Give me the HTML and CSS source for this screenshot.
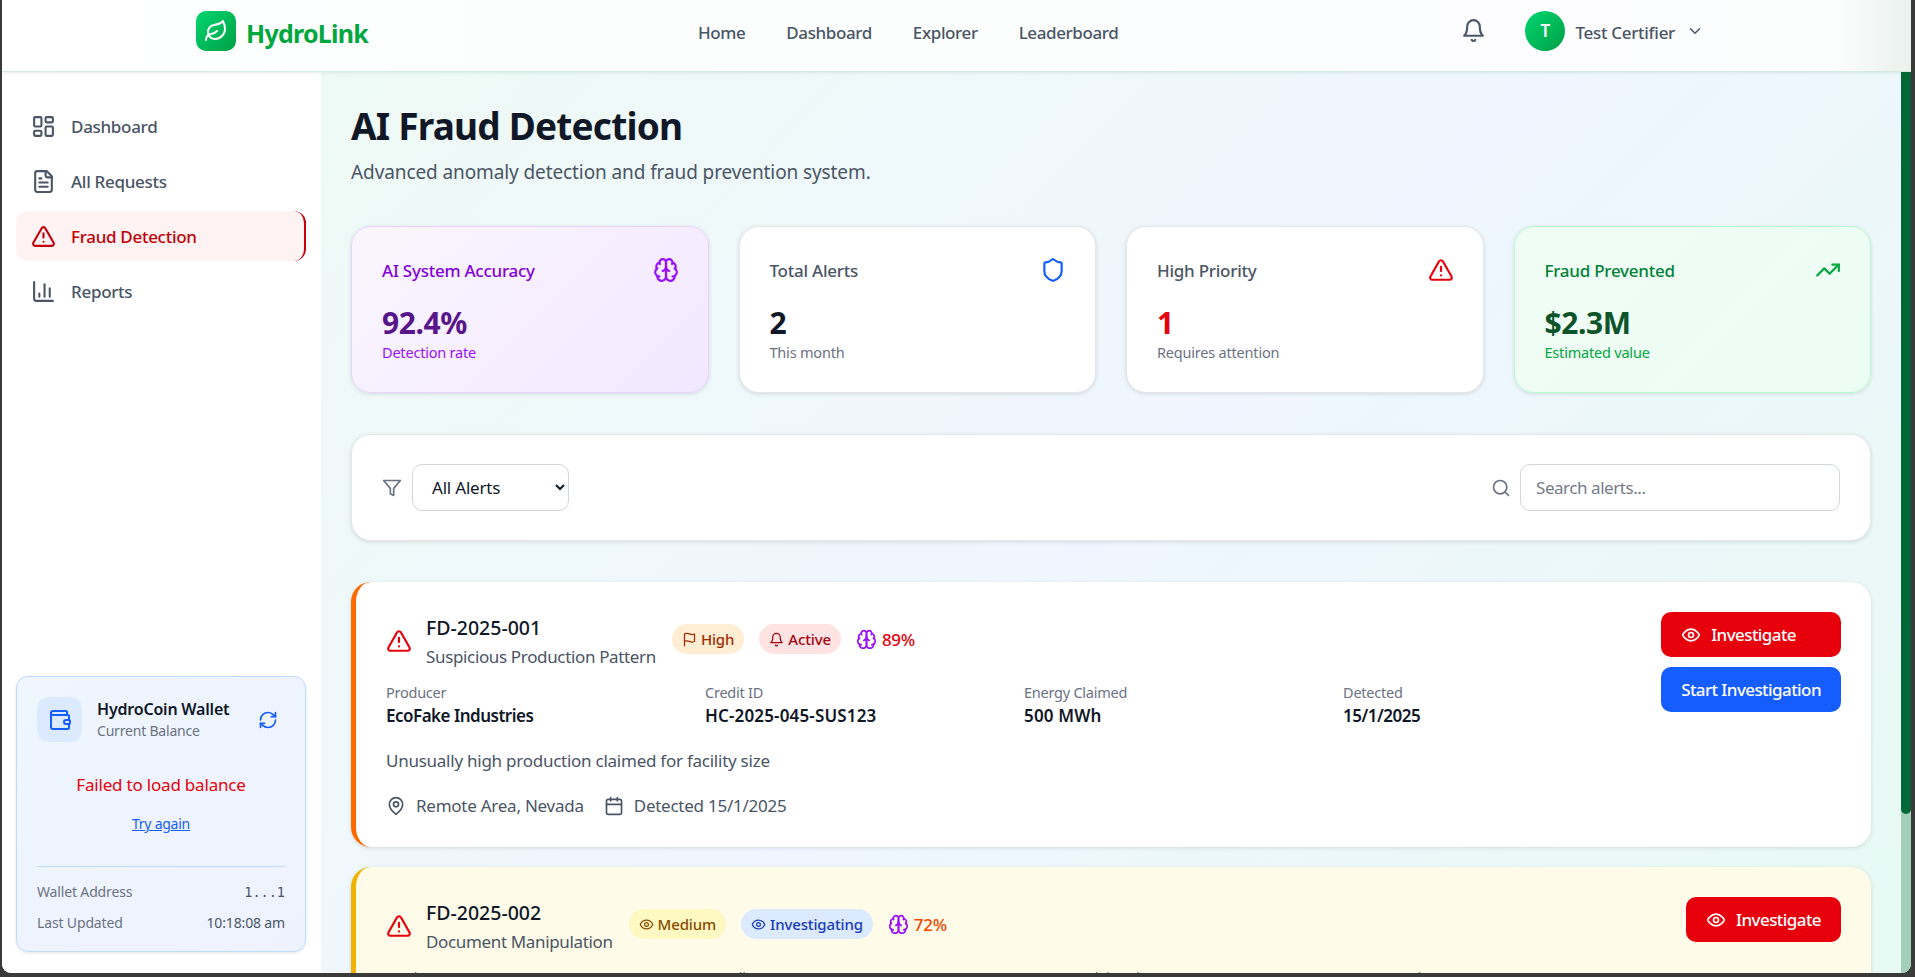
FILE: index.html
```html
<!DOCTYPE html>
<html lang="en">
<head>
    <meta charset="UTF-8">
    <meta name="viewport" content="width=device-width, initial-scale=1.0">
    <title>HydroLink - AI Fraud Detection</title>
    <link rel="stylesheet" href="styles.css">
</head>
<body>
    <svg class="sprite" xmlns="http://www.w3.org/2000/svg">
        <symbol id="i-leaf" viewBox="0 0 24 24"><path d="M11 20A7 7 0 0 1 9.8 6.1C15.5 5 17 4.48 19 2c1 2 2 4.18 2 8 0 5.5-4.78 10-10 10Z"/><path d="M2 21c0-3 1.85-5.36 5.08-6C9.5 14.52 12 13 13 12"/></symbol>
        <symbol id="i-bell" viewBox="0 0 24 24"><path d="M6 8a6 6 0 0 1 12 0c0 7 3 9 3 9H3s3-2 3-9"/><path d="M10.3 21a1.94 1.94 0 0 0 3.4 0"/></symbol>
        <symbol id="i-chevron" viewBox="0 0 24 24"><path d="m6 9 6 6 6-6"/></symbol>
        <symbol id="i-dashboard" viewBox="0 0 24 24"><rect x="3" y="3" width="7" height="9" rx="1"/><rect x="14" y="3" width="7" height="5" rx="1"/><rect x="14" y="12" width="7" height="9" rx="1"/><rect x="3" y="16" width="7" height="5" rx="1"/></symbol>
        <symbol id="i-file" viewBox="0 0 24 24"><path d="M15 2H6a2 2 0 0 0-2 2v16a2 2 0 0 0 2 2h12a2 2 0 0 0 2-2V7Z"/><path d="M14 2v4a2 2 0 0 0 2 2h4"/><path d="M10 9H8"/><path d="M16 13H8"/><path d="M16 17H8"/></symbol>
        <symbol id="i-alert" viewBox="0 0 24 24"><path d="m21.73 18-8-14a2 2 0 0 0-3.48 0l-8 14A2 2 0 0 0 4 21h16a2 2 0 0 0 1.73-3"/><path d="M12 9v4"/><path d="M12 17h.01"/></symbol>
        <symbol id="i-chart" viewBox="0 0 24 24"><path d="M3 3v16a2 2 0 0 0 2 2h16"/><path d="M18 17V9"/><path d="M13 17V5"/><path d="M8 17v-3"/></symbol>
        <symbol id="i-wallet" viewBox="0 0 24 24"><path d="M19 7V4a1 1 0 0 0-1-1H5a2 2 0 0 0 0 4h15a1 1 0 0 1 1 1v4h-3a2 2 0 0 0 0 4h3a1 1 0 0 0 1-1v-2a1 1 0 0 0-1-1"/><path d="M3 5v14a2 2 0 0 0 2 2h15a1 1 0 0 0 1-1v-4"/></symbol>
        <symbol id="i-refresh" viewBox="0 0 24 24"><path d="M3 12a9 9 0 0 1 9-9 9.75 9.75 0 0 1 6.74 2.74L21 8"/><path d="M21 3v5h-5"/><path d="M21 12a9 9 0 0 1-9 9 9.75 9.75 0 0 1-6.74-2.74L3 16"/><path d="M8 16H3v5"/></symbol>
        <symbol id="i-brain" viewBox="0 0 24 24"><path d="M12 5a3 3 0 1 0-5.997.125 4 4 0 0 0-2.526 5.77 4 4 0 0 0 .556 6.588A4 4 0 1 0 12 18Z"/><path d="M12 5a3 3 0 1 1 5.997.125 4 4 0 0 1 2.526 5.77 4 4 0 0 1-.556 6.588A4 4 0 1 1 12 18Z"/><path d="M15 13a4.5 4.5 0 0 1-3-4 4.5 4.5 0 0 1-3 4"/><path d="M17.599 6.5a3 3 0 0 0 .399-1.375"/><path d="M6.003 5.125A3 3 0 0 0 6.401 6.5"/><path d="M3.477 10.896a4 4 0 0 1 .585-.396"/><path d="M19.938 10.5a4 4 0 0 1 .585.396"/><path d="M6 18a4 4 0 0 1-1.967-.516"/><path d="M19.967 17.484A4 4 0 0 1 18 18"/></symbol>
        <symbol id="i-shield" viewBox="0 0 24 24"><path d="M20 13c0 5-3.5 7.5-7.66 8.95a1 1 0 0 1-.67-.01C7.5 20.5 4 18 4 13V6a1 1 0 0 1 1-1c2 0 4.5-1.2 6.24-2.72a1.17 1.17 0 0 1 1.52 0C14.51 3.81 17 5 19 5a1 1 0 0 1 1 1z"/></symbol>
        <symbol id="i-trend" viewBox="0 0 24 24"><polyline points="22 7 13.5 15.5 8.5 10.5 2 17"/><polyline points="16 7 22 7 22 13"/></symbol>
        <symbol id="i-filter" viewBox="0 0 24 24"><polygon points="22 3 2 3 10 12.46 10 19 14 21 14 12.46 22 3"/></symbol>
        <symbol id="i-search" viewBox="0 0 24 24"><circle cx="11" cy="11" r="8"/><path d="m21 21-4.3-4.3"/></symbol>
        <symbol id="i-eye" viewBox="0 0 24 24"><path d="M2 12s3-7 10-7 10 7 10 7-3 7-10 7-10-7-10-7Z"/><circle cx="12" cy="12" r="3"/></symbol>
        <symbol id="i-flag" viewBox="0 0 24 24"><path d="M4 15s1-1 4-1 5 2 8 2 4-1 4-1V3s-1 1-4 1-5-2-8-2-4 1-4 1z"/><path d="M4 22v-7"/></symbol>
        <symbol id="i-pin" viewBox="0 0 24 24"><path d="M20 10c0 6-8 12-8 12s-8-6-8-12a8 8 0 0 1 16 0Z"/><circle cx="12" cy="10" r="3"/></symbol>
        <symbol id="i-calendar" viewBox="0 0 24 24"><path d="M8 2v4"/><path d="M16 2v4"/><rect x="3" y="4" width="18" height="18" rx="2"/><path d="M3 10h18"/></symbol>
    </svg>

    <div class="window">
        <header class="topbar">
            <div class="brand">
                <span class="brand-mark"><svg class="icon"><use href="#i-leaf"/></svg></span>
                <span class="brand-name">HydroLink</span>
            </div>
            <nav class="topnav">
                <a href="#">Home</a>
                <a href="#">Dashboard</a>
                <a href="#">Explorer</a>
                <a href="#">Leaderboard</a>
            </nav>
            <div class="account">
                <svg class="icon bell"><use href="#i-bell"/></svg>
                <span class="avatar">T</span>
                <span class="account-name">Test Certifier</span>
                <svg class="icon account-caret"><use href="#i-chevron"/></svg>
            </div>
        </header>

        <div class="workspace">
            <aside class="sidebar">
                <nav class="sidenav">
                    <a href="#"><svg class="icon"><use href="#i-dashboard"/></svg>Dashboard</a>
                    <a href="#"><svg class="icon"><use href="#i-file"/></svg>All Requests</a>
                    <a href="#" class="active"><svg class="icon"><use href="#i-alert"/></svg>Fraud Detection</a>
                    <a href="#"><svg class="icon"><use href="#i-chart"/></svg>Reports</a>
                </nav>
                <div class="wallet">
                    <div class="wallet-head">
                        <span class="wallet-icon"><svg class="icon"><use href="#i-wallet"/></svg></span>
                        <div class="wallet-title">
                            <strong>HydroCoin Wallet</strong>
                            <span>Current Balance</span>
                        </div>
                        <svg class="icon wallet-refresh"><use href="#i-refresh"/></svg>
                    </div>
                    <p class="wallet-error">Failed to load balance</p>
                    <a href="#" class="wallet-retry">Try again</a>
                    <div class="wallet-meta">
                        <div class="wallet-row"><span>Wallet Address</span><code>1...1</code></div>
                        <div class="wallet-row"><span>Last Updated</span><span class="wallet-time">10:18:08 am</span></div>
                    </div>
                </div>
            </aside>

            <main class="content">
                <h1>AI Fraud Detection</h1>
                <p class="lead">Advanced anomaly detection and fraud prevention system.</p>

                <section class="stats">
                    <div class="stat stat-purple">
                        <div class="stat-top"><span>AI System Accuracy</span><svg class="icon"><use href="#i-brain"/></svg></div>
                        <div class="stat-value">92.4%</div>
                        <div class="stat-note">Detection rate</div>
                    </div>
                    <div class="stat stat-plain">
                        <div class="stat-top"><span>Total Alerts</span><svg class="icon"><use href="#i-shield"/></svg></div>
                        <div class="stat-value">2</div>
                        <div class="stat-note">This month</div>
                    </div>
                    <div class="stat stat-red">
                        <div class="stat-top"><span>High Priority</span><svg class="icon"><use href="#i-alert"/></svg></div>
                        <div class="stat-value">1</div>
                        <div class="stat-note">Requires attention</div>
                    </div>
                    <div class="stat stat-green">
                        <div class="stat-top"><span>Fraud Prevented</span><svg class="icon"><use href="#i-trend"/></svg></div>
                        <div class="stat-value">$2.3M</div>
                        <div class="stat-note">Estimated value</div>
                    </div>
                </section>

                <section class="filters">
                    <svg class="icon filter-icon"><use href="#i-filter"/></svg>
                    <select class="filter-select">
                        <option>All Alerts</option>
                        <option>High Priority</option>
                        <option>Investigating</option>
                    </select>
                    <svg class="icon search-icon"><use href="#i-search"/></svg>
                    <input class="search-input" type="text" placeholder="Search alerts...">
                </section>

                <article class="alert alert-high">
                    <div class="alert-main">
                        <div class="alert-head">
                            <svg class="icon alert-icon"><use href="#i-alert"/></svg>
                            <div class="alert-title">
                                <h3>FD-2025-001</h3>
                                <p>Suspicious Production Pattern</p>
                            </div>
                            <span class="pill pill-orange"><svg class="icon"><use href="#i-flag"/></svg>High</span>
                            <span class="pill pill-red"><svg class="icon"><use href="#i-bell"/></svg>Active</span>
                            <span class="score score-high"><svg class="icon"><use href="#i-brain"/></svg>89%</span>
                        </div>
                        <dl class="facts">
                            <div><dt>Producer</dt><dd>EcoFake Industries</dd></div>
                            <div><dt>Credit ID</dt><dd class="fact-code">HC-2025-045-SUS123</dd></div>
                            <div><dt>Energy Claimed</dt><dd class="fact-code">500 MWh</dd></div>
                            <div><dt>Detected</dt><dd>15/1/2025</dd></div>
                        </dl>
                        <p class="alert-desc">Unusually high production claimed for facility size</p>
                        <div class="alert-meta">
                            <span><svg class="icon"><use href="#i-pin"/></svg>Remote Area, Nevada</span>
                            <span><svg class="icon"><use href="#i-calendar"/></svg>Detected 15/1/2025</span>
                        </div>
                    </div>
                    <div class="alert-actions">
                        <button class="btn btn-red"><svg class="icon"><use href="#i-eye"/></svg>Investigate</button>
                        <button class="btn btn-blue">Start Investigation</button>
                    </div>
                </article>

                <article class="alert alert-medium">
                    <div class="alert-main">
                        <div class="alert-head">
                            <svg class="icon alert-icon"><use href="#i-alert"/></svg>
                            <div class="alert-title">
                                <h3>FD-2025-002</h3>
                                <p>Document Manipulation</p>
                            </div>
                            <span class="pill pill-yellow"><svg class="icon"><use href="#i-eye"/></svg>Medium</span>
                            <span class="pill pill-blue"><svg class="icon"><use href="#i-eye"/></svg>Investigating</span>
                            <span class="score score-medium"><svg class="icon"><use href="#i-brain"/></svg>72%</span>
                        </div>
                        <dl class="facts">
                            <div><dt>Producer</dt><dd>GreenWash Energy</dd></div>
                            <div><dt>Credit ID</dt><dd class="fact-code">HC-2025-032-DOC456</dd></div>
                            <div><dt>Energy Claimed</dt><dd class="fact-code">320 MWh</dd></div>
                            <div><dt>Detected</dt><dd>14/1/2025</dd></div>
                        </dl>
                    </div>
                    <div class="alert-actions">
                        <button class="btn btn-red"><svg class="icon"><use href="#i-eye"/></svg>Investigate</button>
                    </div>
                </article>
            </main>

            <div class="scrollbar"><div class="scrollbar-thumb"></div></div>
        </div>
    </div>
</body>
</html>
```

FILE: styles.css
```css
* {
    box-sizing: border-box;
}
html, body {
    height: 100%;
}
body {
    margin: 0;
    background: #3a3a3a;
    font-family: "Noto Sans", "Open Sans", Arial, sans-serif;
    color: #101828;
    overflow: hidden;
}
a {
    text-decoration: none;
    color: inherit;
}
p, h1, h3, dl, dd {
    margin: 0;
}
.sprite {
    display: none;
}
.icon {
    width: 24px;
    height: 24px;
    flex: none;
    fill: none;
    stroke: currentColor;
    stroke-width: 2;
    stroke-linecap: round;
    stroke-linejoin: round;
}

/* window */
.window {
    display: flex;
    flex-direction: column;
    height: 973px;
    margin-left: 2px;
    margin-right: 4px;
    border-radius: 0 0 9px 9px;
    overflow: hidden;
    background: #fff;
}
.workspace {
    display: flex;
    flex: 1;
    min-height: 0;
}

/* top bar */
.topbar {
    display: flex;
    align-items: center;
    justify-content: space-between;
    flex: none;
    height: 72px;
    padding: 0 207px 10px 194px;
    background: linear-gradient(90deg, #fff 0, #fbfefd 40%, #fdfdff 80%, #fcfdfd 96%, #e9f1ed 100%);
    border-bottom: 1px solid #d5ebe0;
    box-shadow: 0 1px 3px rgba(0, 80, 40, .1);
    position: relative;
    z-index: 2;
}
.brand {
    display: flex;
    align-items: center;
    gap: 10px;
}
.brand-mark {
    display: flex;
    align-items: center;
    justify-content: center;
    width: 40px;
    height: 40px;
    border-radius: 10px;
    background: linear-gradient(135deg, #00d66f, #00a045);
    color: #fff;
}
.brand-name {
    margin-top: 4px;
    font-size: 25px;
    font-weight: 700;
    color: #00a63e;
    letter-spacing: -.75px;
}
.topnav {
    display: flex;
    gap: 41px;
    margin-top: 4px;
    margin-right: 13px;
    font-size: 17px;
    font-weight: 500;
    color: #4a5565;
    letter-spacing: -.4px;
}
.account {
    display: flex;
    align-items: center;
    color: #4a5565;
}
.bell {
    width: 25px;
    height: 25px;
    margin-right: 39px;
}
.avatar {
    display: flex;
    align-items: center;
    justify-content: center;
    width: 40px;
    height: 40px;
    border-radius: 50%;
    background: linear-gradient(135deg, #00d66f, #00a045);
    color: #fff;
    font-size: 17px;
    font-weight: 600;
}
.account-name {
    margin-top: 4px;
    margin-left: 10px;
    font-size: 17px;
    font-weight: 500;
    letter-spacing: -.3px;
}
.account-caret {
    width: 18px;
    height: 18px;
    margin-left: 11px;
}

/* sidebar */
.sidebar {
    display: flex;
    flex-direction: column;
    justify-content: space-between;
    flex: none;
    width: 319px;
    padding: 29px 15px 21px 14px;
    background: #fff;
}
.sidenav {
    display: flex;
    flex-direction: column;
    gap: 5px;
}
.sidenav a {
    display: flex;
    align-items: center;
    gap: 15px;
    height: 50px;
    padding-left: 15px;
    border-radius: 12px;
    font-size: 17px;
    font-weight: 500;
    color: #4a5565;
    letter-spacing: -.3px;
}
.sidenav .icon {
    width: 25px;
    height: 25px;
}
.sidenav a.active {
    background: #fef2f2;
    color: #c10007;
    border-right: 2px solid #c10007;
}

/* wallet */
.wallet {
    padding: 20px 20px 18px;
    border: 1px solid #bedbff;
    border-radius: 12px;
    background: linear-gradient(135deg, #eff6ff, #eef2ff);
    box-shadow: 0 1px 3px rgba(0, 0, 0, .1);
}
.wallet-head {
    display: flex;
    align-items: center;
    gap: 15px;
}
.wallet-icon {
    display: flex;
    align-items: center;
    justify-content: center;
    width: 45px;
    height: 45px;
    border-radius: 12px;
    background: #dbeafe;
    color: #155dfc;
}
.wallet-title {
    display: flex;
    flex-direction: column;
    flex: 1;
}
.wallet-title strong {
    font-size: 16px;
    font-weight: 600;
    line-height: 22px;
    color: #101828;
    letter-spacing: -.2px;
    white-space: nowrap;
}
.wallet-title span {
    font-size: 14px;
    line-height: 22px;
    color: #6a7282;
    letter-spacing: -.2px;
}
.wallet-refresh {
    width: 20px;
    height: 20px;
    margin-right: 7px;
    color: #155dfc;
}
.wallet-error {
    margin-top: 30px;
    font-size: 17px;
    line-height: 26px;
    text-align: center;
    color: #e7000b;
    letter-spacing: -.2px;
}
.wallet-retry {
    display: block;
    margin-top: 16px;
    font-size: 14px;
    line-height: 20px;
    text-align: center;
    color: #155dfc;
    text-decoration: underline;
    letter-spacing: -.25px;
}
.wallet-meta {
    display: flex;
    flex-direction: column;
    gap: 11px;
    margin-top: 32px;
    padding-top: 15px;
    border-top: 1px solid #bedbff;
}
.wallet-row {
    display: flex;
    justify-content: space-between;
    font-size: 14px;
    line-height: 20px;
    color: #6a7282;
    letter-spacing: -.15px;
}
.wallet-row code {
    font-family: "DejaVu Sans Mono", "Liberation Mono", monospace;
    font-size: 13.5px;
    color: #4a5565;
    letter-spacing: 0;
}
.wallet-time {
    color: #4a5565;
}

/* main area */
.content {
    flex: 1;
    min-width: 0;
    padding: 29px 30px 0;
    overflow: hidden;
    background: linear-gradient(135deg, #eefaf5, #eff6ff 50%, #e7faf3);
}
.content h1 {
    font-size: 37px;
    font-weight: 700;
    line-height: 50px;
    color: #101828;
    letter-spacing: -.8px;
}
.lead {
    margin-top: 6px;
    margin-bottom: 39px;
    font-size: 19px;
    line-height: 30px;
    color: #4a5565;
    letter-spacing: -.1px;
}
.scrollbar {
    flex: none;
    width: 10px;
    background: #a3cfb8;
}
.scrollbar-thumb {
    height: 742px;
    border-radius: 0 0 5px 5px;
    background: #006836;
}

/* stat cards */
.stats {
    display: grid;
    grid-template-columns: repeat(4, 1fr);
    gap: 30px;
    margin-bottom: 41px;
}
.stat {
    height: 167px;
    padding: 30px;
    border: 1px solid #e5e7eb;
    border-radius: 20px;
    background: #fff;
    box-shadow: 0 1px 4px rgba(0, 0, 0, .12);
}
.stat-top {
    display: flex;
    align-items: center;
    justify-content: space-between;
    height: 26px;
    font-size: 17px;
    font-weight: 500;
    color: #4a5565;
    letter-spacing: -.25px;
}
.stat-top .icon {
    width: 26px;
    height: 26px;
    margin-right: -1px;
}
.stat-value {
    margin-top: 20px;
    font-size: 30px;
    font-weight: 700;
    line-height: 40px;
    letter-spacing: -.4px;
}
.stat-note {
    margin-top: -1px;
    font-size: 14.5px;
    line-height: 20px;
    color: #6a7282;
    letter-spacing: -.2px;
}
.stat-plain .icon {
    color: #155dfc;
}
.stat-red .icon {
    color: #e7000b;
}
.stat-red .stat-value {
    color: #e7000b;
}
.stat-purple {
    border-color: #e9d4ff;
    background: linear-gradient(135deg, #faf5ff, #f3e8ff);
}
.stat-purple .stat-top {
    color: #8200db;
}
.stat-purple .icon {
    color: #9810fa;
}
.stat-purple .stat-value {
    color: #59168b;
}
.stat-purple .stat-note {
    color: #9810fa;
}
.stat-green {
    border-color: #b9f8cf;
    background: linear-gradient(135deg, #f0fdf4, #ecfdf5);
}
.stat-green .stat-top {
    color: #008236;
}
.stat-green .icon {
    color: #00a63e;
}
.stat-green .stat-value {
    color: #0d542b;
}
.stat-green .stat-note {
    color: #00a63e;
}

/* filter bar */
.filters {
    display: flex;
    align-items: center;
    height: 107px;
    padding: 0 30px;
    margin-bottom: 41px;
    border: 1px solid #e5e7eb;
    border-radius: 20px;
    background: #fff;
    box-shadow: 0 1px 4px rgba(0, 0, 0, .12);
}
.filter-icon, .search-icon {
    width: 20px;
    height: 20px;
    color: #6a7282;
}
.filter-select {
    width: 157px;
    height: 47px;
    margin-left: 10px;
    padding: 0 15px;
    border: 1px solid #d1d5dc;
    border-radius: 10px;
    background: #fff;
    font-family: inherit;
    font-size: 17px;
    color: #101828;
    letter-spacing: -.2px;
}
.search-icon {
    margin-left: auto;
}
.search-input {
    width: 320px;
    height: 47px;
    margin-left: 9px;
    padding: 0 15px;
    border: 1px solid #d1d5dc;
    border-radius: 10px;
    font-family: inherit;
    font-size: 17px;
    letter-spacing: -.45px;
}
.search-input::placeholder {
    color: #757c88;
}

/* alert cards */
.alert {
    display: flex;
    gap: 25px;
    padding: 30px 30px 28px;
    margin-bottom: 20px;
    border-left: 5px solid #ff6900;
    border-radius: 20px;
    background: #fff;
    box-shadow: 0 1px 4px rgba(0, 0, 0, .12);
}
.alert-medium {
    border-left-color: #f0b100;
    background: #fefce8;
}
.alert-main {
    flex: 1;
    min-width: 0;
}
.alert-head {
    display: flex;
    align-items: center;
    gap: 15px;
}
.alert-icon {
    width: 26px;
    height: 26px;
    margin-right: -1px;
    color: #e7000b;
}
.alert-title {
    margin-right: 1px;
}
.alert-title h3 {
    margin-top: 1px;
    font-size: 19.5px;
    font-weight: 500;
    line-height: 30px;
    color: #101828;
}
.alert-title p {
    font-size: 17px;
    line-height: 27px;
    color: #4a5565;
    letter-spacing: -.35px;
}
.pill {
    display: flex;
    align-items: center;
    gap: 4px;
    height: 30px;
    margin-bottom: 4px;
    padding: 0 10px;
    border-radius: 15px;
    font-size: 15px;
    font-weight: 500;
    letter-spacing: -.15px;
}
.pill .icon {
    width: 15px;
    height: 15px;
}
.pill-orange {
    background: #ffedd4;
    color: #9f2d00;
}
.pill-red {
    background: #ffe2e2;
    color: #9f0712;
}
.pill-yellow {
    background: #fef9c2;
    color: #894b00;
}
.pill-blue {
    background: #dbeafe;
    color: #193cb8;
}
.score {
    display: flex;
    align-items: center;
    gap: 5px;
    margin-bottom: 4px;
    font-size: 17px;
    font-weight: 500;
    letter-spacing: -.3px;
}
.score .icon {
    width: 21px;
    height: 21px;
    color: #9810fa;
}
.score-high {
    color: #e7000b;
}
.score-medium {
    color: #f54900;
}
.facts {
    display: grid;
    grid-template-columns: repeat(4, 1fr);
    gap: 26px;
    margin-top: 12px;
}
.facts dt {
    font-size: 14.5px;
    line-height: 20px;
    color: #6a7282;
    letter-spacing: -.25px;
}
.facts dd {
    margin-top: 1px;
    font-size: 17px;
    font-weight: 600;
    line-height: 26px;
    color: #101828;
    letter-spacing: -.5px;
}
.facts .fact-code {
    letter-spacing: .15px;
}
.alert-desc {
    margin-top: 19px;
    font-size: 17px;
    line-height: 26px;
    color: #4a5565;
    letter-spacing: -.25px;
}
.alert-meta {
    display: flex;
    gap: 20px;
    margin-top: 19px;
    font-size: 17px;
    line-height: 26px;
    color: #4a5565;
    letter-spacing: -.25px;
}
.alert-meta span {
    display: flex;
    align-items: center;
    gap: 10px;
}
.alert-meta .icon {
    width: 20px;
    height: 20px;
}
.alert-actions {
    display: flex;
    flex-direction: column;
    gap: 10px;
    flex: none;
}
.btn {
    display: flex;
    align-items: center;
    gap: 10px;
    height: 45px;
    padding: 0 20px;
    border: none;
    border-radius: 10px;
    color: #fff;
    font-family: inherit;
    font-size: 17px;
    font-weight: 500;
    letter-spacing: -.58px;
    cursor: pointer;
}
.btn .icon {
    width: 20px;
    height: 20px;
}
.btn-red {
    background: #e7000b;
}
.btn-blue {
    background: #155dfc;
}
```
